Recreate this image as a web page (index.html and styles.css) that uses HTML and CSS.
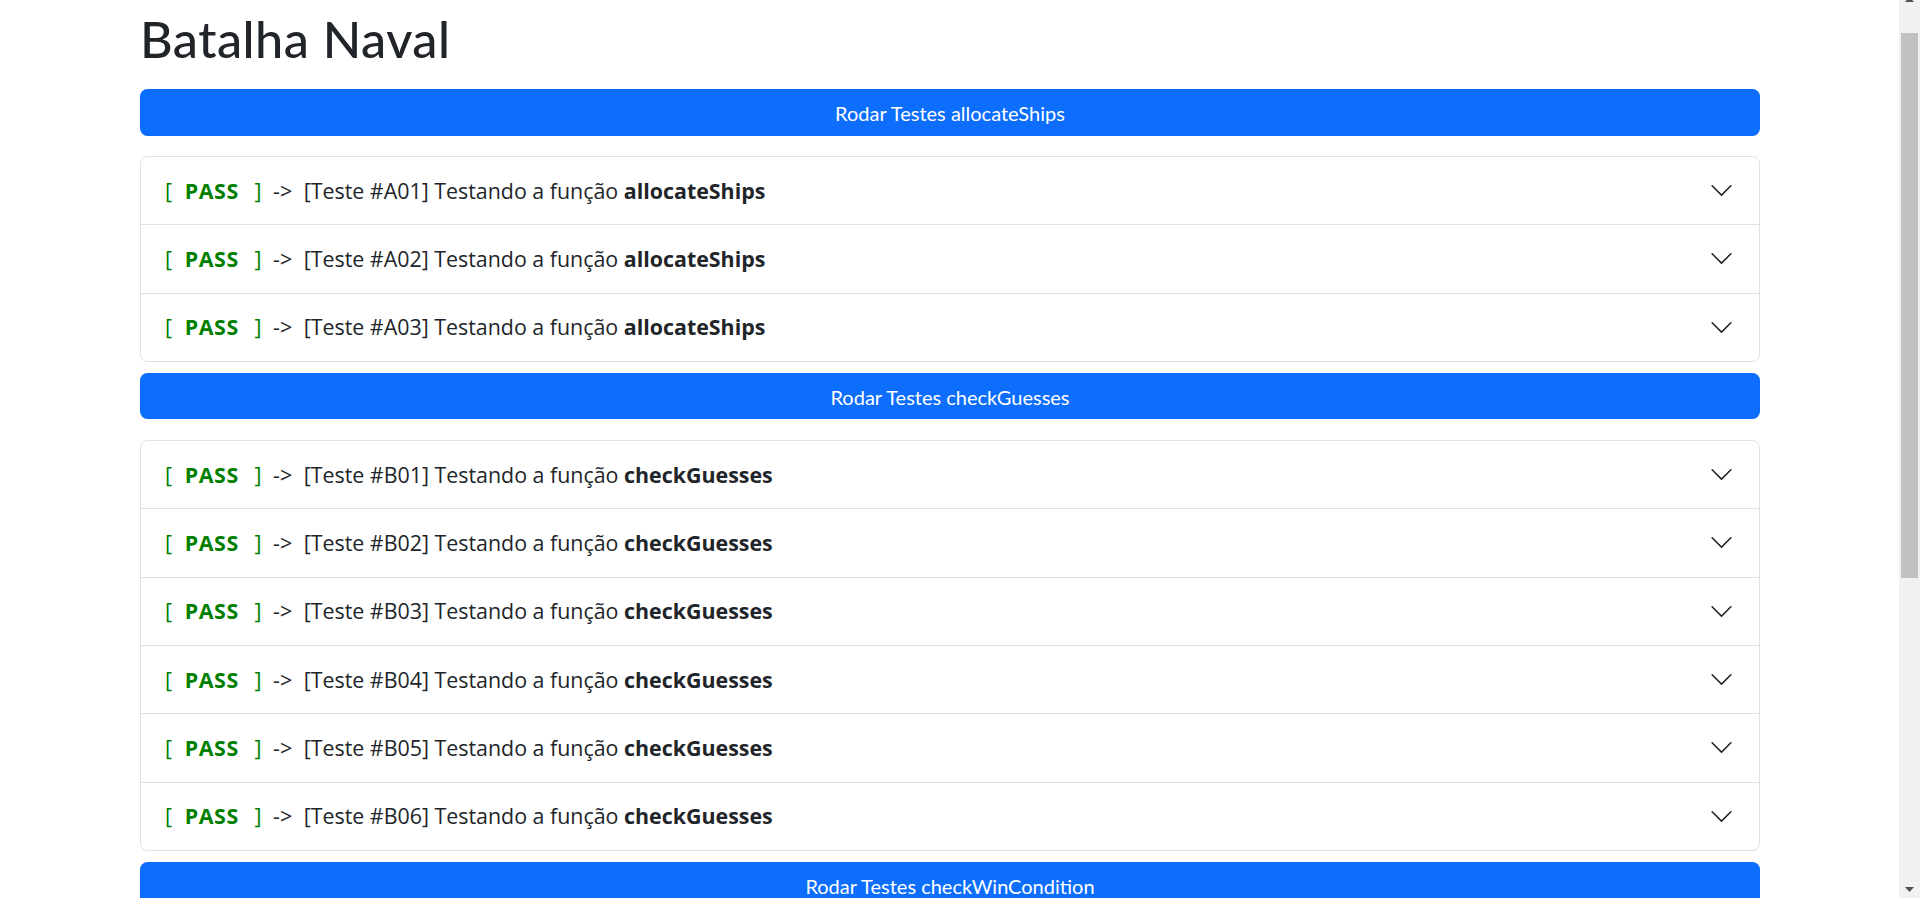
FILE: index.html
```html
<!DOCTYPE html>
<html lang="pt-BR">
<head>
<meta charset="utf-8">
<title>Batalha Naval</title>
<link rel="stylesheet" href="styles.css">
</head>
<body>
<main class="container">
  <h1 class="title">Batalha Naval</h1>

  <button class="run-btn" type="button">Rodar Testes allocateShips</button>
  <div class="accordion">
    <div class="item"><span class="status"><span class="br">[</span><b class="pass">PASS</b><span class="br">]</span></span><span class="arrow">-&gt;</span><span class="desc">[Teste #A01] Testando a função <b>allocateShips</b></span><svg class="chev" viewBox="0 0 16 16"><path d="M1.646 4.646a.5.5 0 0 1 .708 0L8 10.293l5.646-5.647a.5.5 0 0 1 .708.708l-6 6a.5.5 0 0 1-.708 0l-6-6a.5.5 0 0 1 0-.708z"/></svg></div>
    <div class="item"><span class="status"><span class="br">[</span><b class="pass">PASS</b><span class="br">]</span></span><span class="arrow">-&gt;</span><span class="desc">[Teste #A02] Testando a função <b>allocateShips</b></span><svg class="chev" viewBox="0 0 16 16"><path d="M1.646 4.646a.5.5 0 0 1 .708 0L8 10.293l5.646-5.647a.5.5 0 0 1 .708.708l-6 6a.5.5 0 0 1-.708 0l-6-6a.5.5 0 0 1 0-.708z"/></svg></div>
    <div class="item"><span class="status"><span class="br">[</span><b class="pass">PASS</b><span class="br">]</span></span><span class="arrow">-&gt;</span><span class="desc">[Teste #A03] Testando a função <b>allocateShips</b></span><svg class="chev" viewBox="0 0 16 16"><path d="M1.646 4.646a.5.5 0 0 1 .708 0L8 10.293l5.646-5.647a.5.5 0 0 1 .708.708l-6 6a.5.5 0 0 1-.708 0l-6-6a.5.5 0 0 1 0-.708z"/></svg></div>
  </div>

  <button class="run-btn" type="button">Rodar Testes checkGuesses</button>
  <div class="accordion">
    <div class="item"><span class="status"><span class="br">[</span><b class="pass">PASS</b><span class="br">]</span></span><span class="arrow">-&gt;</span><span class="desc">[Teste #B01] Testando a função <b>checkGuesses</b></span><svg class="chev" viewBox="0 0 16 16"><path d="M1.646 4.646a.5.5 0 0 1 .708 0L8 10.293l5.646-5.647a.5.5 0 0 1 .708.708l-6 6a.5.5 0 0 1-.708 0l-6-6a.5.5 0 0 1 0-.708z"/></svg></div>
    <div class="item"><span class="status"><span class="br">[</span><b class="pass">PASS</b><span class="br">]</span></span><span class="arrow">-&gt;</span><span class="desc">[Teste #B02] Testando a função <b>checkGuesses</b></span><svg class="chev" viewBox="0 0 16 16"><path d="M1.646 4.646a.5.5 0 0 1 .708 0L8 10.293l5.646-5.647a.5.5 0 0 1 .708.708l-6 6a.5.5 0 0 1-.708 0l-6-6a.5.5 0 0 1 0-.708z"/></svg></div>
    <div class="item"><span class="status"><span class="br">[</span><b class="pass">PASS</b><span class="br">]</span></span><span class="arrow">-&gt;</span><span class="desc">[Teste #B03] Testando a função <b>checkGuesses</b></span><svg class="chev" viewBox="0 0 16 16"><path d="M1.646 4.646a.5.5 0 0 1 .708 0L8 10.293l5.646-5.647a.5.5 0 0 1 .708.708l-6 6a.5.5 0 0 1-.708 0l-6-6a.5.5 0 0 1 0-.708z"/></svg></div>
    <div class="item"><span class="status"><span class="br">[</span><b class="pass">PASS</b><span class="br">]</span></span><span class="arrow">-&gt;</span><span class="desc">[Teste #B04] Testando a função <b>checkGuesses</b></span><svg class="chev" viewBox="0 0 16 16"><path d="M1.646 4.646a.5.5 0 0 1 .708 0L8 10.293l5.646-5.647a.5.5 0 0 1 .708.708l-6 6a.5.5 0 0 1-.708 0l-6-6a.5.5 0 0 1 0-.708z"/></svg></div>
    <div class="item"><span class="status"><span class="br">[</span><b class="pass">PASS</b><span class="br">]</span></span><span class="arrow">-&gt;</span><span class="desc">[Teste #B05] Testando a função <b>checkGuesses</b></span><svg class="chev" viewBox="0 0 16 16"><path d="M1.646 4.646a.5.5 0 0 1 .708 0L8 10.293l5.646-5.647a.5.5 0 0 1 .708.708l-6 6a.5.5 0 0 1-.708 0l-6-6a.5.5 0 0 1 0-.708z"/></svg></div>
    <div class="item"><span class="status"><span class="br">[</span><b class="pass">PASS</b><span class="br">]</span></span><span class="arrow">-&gt;</span><span class="desc">[Teste #B06] Testando a função <b>checkGuesses</b></span><svg class="chev" viewBox="0 0 16 16"><path d="M1.646 4.646a.5.5 0 0 1 .708 0L8 10.293l5.646-5.647a.5.5 0 0 1 .708.708l-6 6a.5.5 0 0 1-.708 0l-6-6a.5.5 0 0 1 0-.708z"/></svg></div>
  </div>

  <button class="run-btn" type="button">Rodar Testes checkWinCondition</button>
</main>

<svg class="scrollbar" aria-hidden="true" width="21" height="898" viewBox="0 0 21 898">
  <rect x="0" y="0" width="21" height="898" fill="#f1f1f1"/>
  <path d="M10.5 -3L15 2H6z" fill="#505050"/>
  <rect x="2" y="33" width="17" height="545" fill="#c1c1c1"/>
  <path d="M6 887h9l-4.5 5z" fill="#505050"/>
</svg>
</body>
</html>
```
FILE: styles.css
```css
* {
  box-sizing: border-box;
}

html,
body {
  margin: 0;
  padding: 0;
  background: #fff;
}

body {
  color: #212529;
  font-family: "Open Sans", "Noto Sans", sans-serif;
}

.container {
  width: 1620px;
  margin: 0 0 0 140px;
  padding: 9px 0 0;
}

.title {
  margin: 0 0 20px;
  font-family: Lato, "Open Sans", sans-serif;
  font-size: 50.4px;
  font-weight: 500;
  letter-spacing: 0.5px;
  line-height: 60px;
  color: #212529;
}

.run-btn {
  display: block;
  width: 100%;
  height: 46.5px;
  margin: 0;
  padding: 1px 0 0;
  border: 0;
  border-radius: 7.5px;
  background: #0d6efd;
  color: #fff;
  font-family: Lato, "Open Sans", sans-serif;
  font-size: 20px;
  line-height: 30px;
  text-align: center;
}

.accordion {
  margin: 20.5px 0 11px;
  border: 1px solid #dee2e6;
  border-radius: 7.5px;
  overflow: hidden;
}

.item {
  display: flex;
  align-items: center;
  height: 67.33px;
  padding: 0 25px 0 24px;
  font-size: 21.4px;
  line-height: 30px;
  white-space: nowrap;
}

.item + .item {
  height: 68.33px;
  border-top: 1px solid #dee2e6;
}

.status {
  color: #008000;
}

.pass {
  font-weight: 700;
  letter-spacing: 0.6px;
  margin: 0 15.7px 0 12.7px;
}

.arrow {
  margin: 0 11.5px 0 11.5px;
}

.desc b {
  font-weight: 700;
}

.chev {
  flex: none;
  width: 25px;
  height: 25px;
  margin-left: auto;
  fill: #212529;
}

/* browser scrollbar as seen in the capture; sits over the page's right edge */
.scrollbar {
  position: fixed;
  top: 0;
  right: 0;
  display: block;
}
```
